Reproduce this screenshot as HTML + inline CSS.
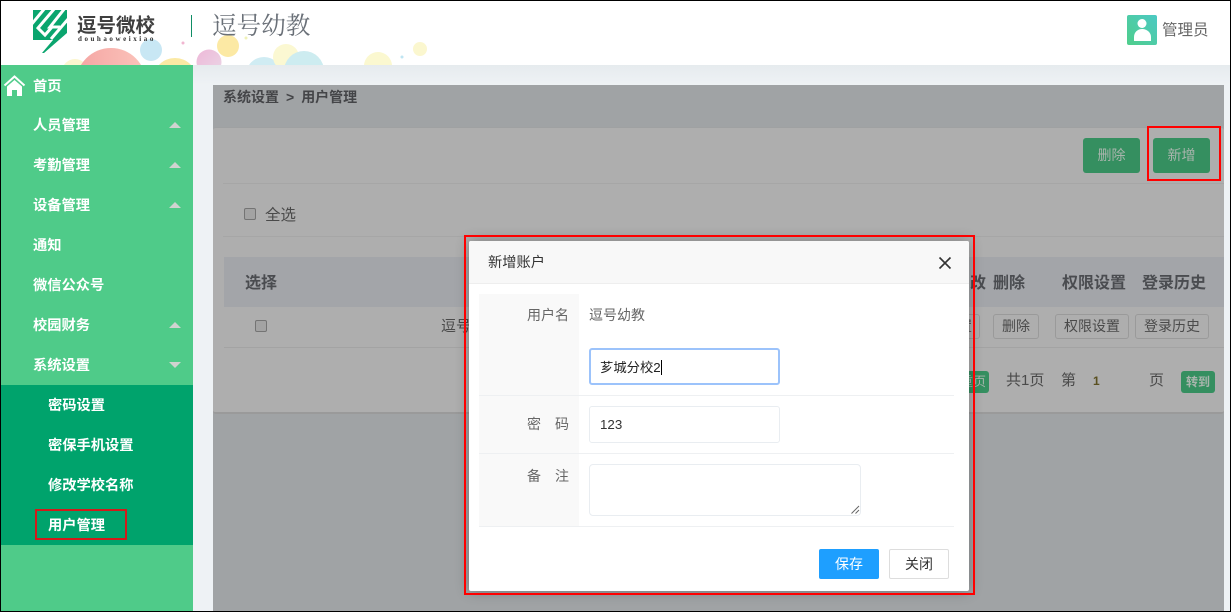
<!DOCTYPE html>
<html lang="zh"><head><meta charset="utf-8"><title>用户管理</title>
<style>
*{box-sizing:border-box}
html,body{margin:0;padding:0;width:1231px;height:612px;overflow:hidden;background:#eef2f5;font-family:"Liberation Sans","Noto Sans CJK SC",sans-serif;font-size:14px;color:#555}
.a{position:absolute;white-space:nowrap}
.m{position:absolute;left:33px;color:#fff;font-weight:bold;font-size:14.25px;line-height:22px;white-space:nowrap}
.s{left:48px}
.up,.dn{position:absolute;left:169px;width:0;height:0;border-left:6.5px solid transparent;border-right:6.5px solid transparent}
.up{border-bottom:6px solid #cfd3d0}
.dn{border-top:6px solid #cfd3d0}
.b{position:absolute;background:#358f60;color:#a9b5ad;border-radius:3px;text-align:center}
.o{position:absolute;border:1px solid #9a9a9a;border-radius:3px;text-align:center;font-size:14px;line-height:23px;height:25px;color:#4a4a4a}
.th{position:absolute;font-weight:bold;font-size:16px;color:#4a4c50;line-height:22px;white-space:nowrap}
.cb{position:absolute;width:12px;height:12px;border:1px solid #747474;border-radius:2px;background:#a3a3a3}
.t{position:absolute;color:#4a4a4a;white-space:nowrap}
.line{position:absolute;height:1px}
.lab{position:absolute;color:#666;white-space:nowrap;line-height:20px}
.red{position:absolute;border:2px solid #f00}
</style></head><body>
<!-- header -->
<div class="a" style="left:0;top:0;width:1231px;height:65px;background:#fff;overflow:hidden">
<svg width="1231" height="65" style="position:absolute;left:0;top:0">
<defs><linearGradient id="g" x1="0" y1="1" x2="1" y2="0"><stop offset="0" stop-color="#4fce8b"/><stop offset="1" stop-color="#4cc9c4"/></linearGradient>
<linearGradient id="r" x1="0" y1="0" x2="1" y2="0"><stop offset="0" stop-color="#f5a5a3"/><stop offset="1" stop-color="#fbc4bb"/></linearGradient>
<linearGradient id="p" x1="0" y1="0" x2="1" y2="1"><stop offset="0" stop-color="#eeb8d8"/><stop offset="1" stop-color="#ead6e6"/></linearGradient>
<clipPath id="sh"><path d="M33 10H67V33L44 53H42L53 40H33Z"/></clipPath></defs>
<circle cx="75" cy="72" r="13" fill="#fbf6cf"/>
<circle cx="111" cy="83" r="35" fill="url(#r)"/>
<circle cx="151" cy="50" r="11" fill="#c8e7f4"/>
<circle cx="175" cy="80" r="22" fill="#fbe9a4"/>
<circle cx="209" cy="62" r="12.5" fill="url(#p)"/>
<circle cx="228" cy="46" r="11" fill="#fce9a4"/>
<circle cx="264" cy="75" r="18" fill="#d0ecf3"/>
<circle cx="286" cy="57" r="13" fill="#fbf8d2"/>
<circle cx="304" cy="71" r="20" fill="#cdecf0"/>
<circle cx="378" cy="66" r="14" fill="#fbf8d0"/>
<circle cx="420" cy="49" r="7" fill="#fbf7cf"/>
<circle cx="402" cy="57" r="1.5" fill="#bfe5f2"/>
<circle cx="183" cy="43" r="1.5" fill="#f1b6d1"/>
<circle cx="246" cy="38" r="1.5" fill="#f0f2b8"/>
<!-- logo -->
<path d="M33 10H67V33L44 53H42L53 40H33Z" fill="#0aa56e"/>
<g clip-path="url(#sh)" fill="none" stroke="#fff" stroke-width="3">
<path d="M31 25L45 8"/>
<path d="M55 8L38 28L45 35L52 27"/>
<path d="M65 8L50 27L60 27"/>
<path d="M69 18L51 39"/>
</g>
<rect x="191" y="15" width="1" height="22" fill="#0f8d65"/>
<rect x="1127" y="15" width="30" height="30" rx="2" fill="url(#g)"/>
<circle cx="1142" cy="23.5" r="4.5" fill="#fff"/>
<path d="M1134 41V37C1134 32 1138 29 1142 29C1146 29 1151 32 1151 37V41Z" fill="#fff"/>
</svg>
<div class="a" style="left:77px;top:13px;font-size:19.5px;font-weight:bold;color:#3f3f3f;line-height:26px">逗号微校</div>
<div class="a" style="left:78px;top:34px;font:bold 7px/10px 'Liberation Serif',serif;letter-spacing:2.55px;color:#333">douhaoweixiao</div>
<div class="a" style="left:212px;top:10px;font-size:24.6px;line-height:34px;color:#6a7078;font-family:'Liberation Serif','Noto Serif CJK SC',serif">逗号幼教</div>
<div class="a" style="left:1162px;top:21px;font-size:15.5px;line-height:20px;color:#666">管理员</div>
</div>
<div class="a" style="left:193px;top:65px;width:1037px;height:20px;background:linear-gradient(#e6ebee,#eef2f5)"></div>
<!-- sidebar -->
<div class="a" style="left:1px;top:65px;width:192px;height:547px;background:#4fcb89"></div>
<div class="a" style="left:1px;top:385px;width:192px;height:160px;background:#00a36c"></div>
<svg class="a" style="left:3px;top:74px" width="24" height="24"><path d="M1.5 11.5L11.5 2.5L21.5 11.5" fill="none" stroke="#fff" stroke-width="2"/><path d="M4 12.5L11.5 6L19 12.5V22H14V16H9V22H4Z" fill="#fff"/></svg>
<div class="m" style="top:76px">首页</div>
<div class="m" style="top:115px">人员管理</div><div class="up" style="top:122px"></div>
<div class="m" style="top:155px">考勤管理</div><div class="up" style="top:162px"></div>
<div class="m" style="top:195px">设备管理</div><div class="up" style="top:202px"></div>
<div class="m" style="top:235px">通知</div>
<div class="m" style="top:275px">微信公众号</div>
<div class="m" style="top:315px">校园财务</div><div class="up" style="top:322px"></div>
<div class="m" style="top:355px">系统设置</div><div class="dn" style="top:362px"></div>
<div class="m s" style="top:395px">密码设置</div>
<div class="m s" style="top:435px">密保手机设置</div>
<div class="m s" style="top:475px">修改学校名称</div>
<div class="m s" style="top:515px">用户管理</div>
<div class="a" style="left:35px;top:509px;width:92px;height:31px;border:2px solid #d21a1a"></div>
<!-- dim content -->
<div class="a" style="left:213px;top:85px;width:1011px;height:527px;background:#a0a3a5"></div>
<div class="a" style="left:223px;top:87px;font-size:14px;font-weight:bold;line-height:20px;color:#444548">系统设置<span style="margin:0 7px 0 7px">&gt;</span>用户管理</div>
<div class="a" style="left:213px;top:127px;width:1011px;height:287px;background:#aeaeae;border-radius:3px;border-bottom:2px solid #9a9a9a;border-top:1px solid #9fa1a2"></div>
<div class="line" style="left:223px;top:183px;width:1001px;background:#a6a6a6"></div>
<div class="line" style="left:223px;top:236px;width:1001px;background:#a6a6a6"></div>
<div class="b" style="left:1083px;top:138px;width:57px;height:35px;line-height:35px;font-size:14px">删除</div>
<div class="b" style="left:1153px;top:138px;width:57px;height:35px;line-height:35px;font-size:14px">新增</div>
<div class="red" style="left:1147px;top:126px;width:74px;height:55px"></div>
<div class="cb" style="left:244px;top:208px"></div>
<div class="t" style="left:265px;top:206px;font-size:15.5px;line-height:20px">全选</div>
<div class="a" style="left:224px;top:257px;width:1000px;height:50px;background:#a3a5a9"></div>
<div class="th" style="left:245px;top:273px">选择</div>
<div class="th" style="left:970px;top:273px">改</div>
<div class="th" style="left:993px;top:273px">删除</div>
<div class="th" style="left:1062px;top:273px">权限设置</div>
<div class="th" style="left:1142px;top:273px">登录历史</div>
<div class="cb" style="left:255px;top:320px"></div>
<div class="t" style="left:441px;top:317px;font-size:15px;line-height:20px">逗号幼教</div>
<div class="o" style="left:950px;top:314px;width:30px">置</div>
<div class="o" style="left:993px;top:314px;width:46px">删除</div>
<div class="o" style="left:1055px;top:314px;width:74px">权限设置</div>
<div class="o" style="left:1135px;top:314px;width:74px">登录历史</div>
<div class="line" style="left:224px;top:347px;width:1000px;background:#a3a3a3"></div>
<div class="b" style="left:950px;top:371px;width:39px;height:22px;line-height:22px;font-size:13px;text-align:right;padding-right:3px">重页</div>
<div class="t" style="left:1006px;top:371px;font-size:15px;line-height:20px">共1页</div>
<div class="t" style="left:1061px;top:371px;font-size:15px;line-height:20px">第</div>
<div class="t" style="left:1093px;top:372px;font-size:12px;line-height:18px;font-weight:bold;color:#5a5020">1</div>
<div class="t" style="left:1149px;top:371px;font-size:15px;line-height:20px">页</div>
<div class="b" style="left:1181px;top:371px;width:34px;height:22px;line-height:22px;font-size:12px;font-weight:bold">转到</div>
<!-- modal -->
<div class="a" style="left:469px;top:241px;width:500px;height:350px;background:#fff;border-radius:2px;box-shadow:0 0 14px rgba(0,0,0,.3)"></div>
<div class="a" style="left:469px;top:241px;width:500px;height:43px;background:#f8f8f8;border-bottom:1px solid #eee;border-radius:2px 2px 0 0"></div>
<div class="a" style="left:488px;top:252px;font-size:14.25px;line-height:22px;color:#333">新增账户</div>
<svg class="a" style="left:938px;top:256px" width="14" height="14"><path d="M1.5 1.5L12.5 12.5M12.5 1.5L1.5 12.5" stroke="#333" stroke-width="1.6"/></svg>
<div class="a" style="left:479px;top:294px;width:100px;height:233px;background:#f9f9f9"></div>
<div class="line" style="left:479px;top:395px;width:475px;background:#eef0f2"></div>
<div class="line" style="left:479px;top:453px;width:475px;background:#eef0f2"></div>
<div class="line" style="left:479px;top:526px;width:475px;background:#eef0f2"></div>
<div class="lab" style="left:527px;top:305px">用户名</div>
<div class="lab" style="left:527px;top:414px">密<span style="margin-left:14px">码</span></div>
<div class="lab" style="left:527px;top:466px">备<span style="margin-left:14px">注</span></div>
<div class="lab" style="left:589px;top:305px">逗号幼教</div>
<div class="a" style="left:589px;top:348px;width:191px;height:37px;border:2px solid #9cc3fb;border-radius:3px;background:#fff"></div>
<div class="a" style="left:600px;top:358px;font-size:13.33px;line-height:20px;color:#222">芗城分校2</div>
<div class="a" style="left:661px;top:360px;width:1px;height:15px;background:#000"></div>
<div class="a" style="left:589px;top:406px;width:191px;height:37px;border:1px solid #e9edf1;border-radius:3px;background:#fff"></div>
<div class="a" style="left:600px;top:415px;font-size:13.33px;line-height:20px;color:#333">123</div>
<div class="a" style="left:589px;top:464px;width:272px;height:52px;border:1px solid #e9edf1;border-radius:4px;background:#fff"></div>
<svg class="a" style="left:851px;top:505px" width="9" height="10"><path d="M0.5 8.5L8 1M4.5 8.5L8 5" stroke="#666" stroke-width="1"/></svg>
<div class="a" style="left:819px;top:549px;width:60px;height:30px;background:#1e9fff;border-radius:2px;color:#fff;text-align:center;line-height:30px">保存</div>
<div class="a" style="left:889px;top:549px;width:60px;height:30px;background:#fff;border:1px solid #ddd;border-radius:2px;color:#333;text-align:center;line-height:28px">关闭</div>
<div class="red" style="left:464px;top:235px;width:511px;height:360px"></div>
<!-- frame -->
<div class="a" style="left:0;top:0;width:1231px;height:612px;border:1px solid #000;pointer-events:none"></div>
</body></html>
